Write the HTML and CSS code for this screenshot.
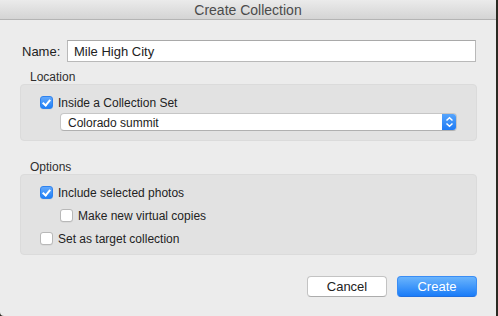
FILE: index.html
```html
<!DOCTYPE html>
<html lang="en">
<head>
    <meta charset="UTF-8">
    <title>Create Collection</title>
    <link rel="stylesheet" href="styles.css">
</head>
<body>
<div class="dialog">
    <div class="titlebar">Create Collection</div>

    <div class="content">
        <div class="name-row">
            <label class="name-label" for="name">Name:</label>
            <input type="text" id="name" class="name-input" value="Mile High City">
        </div>

        <div class="section-title">Location</div>
        <div class="group location">
            <div class="check-row">
                <span class="check checked"></span>
                <span class="check-label">Inside a Collection Set</span>
            </div>
            <div class="popup">
                <span class="popup-text">Colorado summit</span>
                <span class="stepper">
                    <svg width="9" height="12" viewBox="0 0 9 12">
                        <path d="M1.5 4.5 L4.5 1.8 L7.5 4.5 M1.5 7.5 L4.5 10.2 L7.5 7.5" fill="none" stroke="#fff" stroke-width="1.5"/>
                    </svg>
                </span>
            </div>
        </div>

        <div class="section-title options-title">Options</div>
        <div class="group options">
            <div class="check-row">
                <span class="check checked"></span>
                <span class="check-label">Include selected photos</span>
            </div>
            <div class="check-row indent">
                <span class="check"></span>
                <span class="check-label">Make new virtual copies</span>
            </div>
            <div class="check-row">
                <span class="check"></span>
                <span class="check-label">Set as target collection</span>
            </div>
        </div>

        <div class="buttons">
            <button type="button" class="btn">Cancel</button>
            <button type="button" class="btn primary">Create</button>
        </div>
    </div>
</div>
</body>
</html>
```

FILE: styles.css
```css
* {
    margin: 0;
    padding: 0;
    box-sizing: border-box;
    font-family: 'Liberation Sans', Arial, sans-serif;
}

body {
    background: #2b2a22;
    width: 498px;
    height: 316px;
    overflow: hidden;
}

.dialog {
    width: 496px;
    height: 316px;
    background: #ececec;
    border-bottom-left-radius: 4px;
    display: flex;
    flex-direction: column;
    color: #222;
    font-size: 12px;
}

.titlebar {
    height: 20px;
    line-height: 20px;
    text-align: center;
    font-size: 14px;
    color: #4b4b4b;
    background: linear-gradient(#ebebeb, #d4d4d4);
    border-bottom: 1px solid #b4b4b4;
}

.content {
    padding: 20px 19px 0 20px;
    display: flex;
    flex-direction: column;
}

.name-row {
    display: flex;
    align-items: center;
    font-size: 13px;
}

.name-label {
    width: 47px;
    padding-left: 2px;
}

.name-input {
    width: 409px;
    height: 22px;
    border: 1px solid #b9b9b9;
    border-top-color: #a9a9a9;
    background: #fff;
    padding: 0 6px;
    font-size: 13px;
    color: #222;
    outline: none;
}

.section-title {
    height: 15px;
    line-height: 17px;
    margin-top: 7px;
    padding-left: 10px;
    color: #2e2e2e;
}

.options-title {
    margin-top: 18px;
}

.group {
    background: #e2e2e2;
    border: 1px solid #dbdbdb;
    border-radius: 4px;
    padding: 9px 19px 9px 19px;
    display: flex;
    flex-direction: column;
}

.location {
    height: 57px;
    gap: 3px;
}

.options {
    height: 81px;
    gap: 7px;
    padding-bottom: 8px;
}

.check-row {
    height: 16px;
    display: flex;
    align-items: center;
    gap: 5px;
}

.check-label {
    padding-top: 1px;
}

.check-row.indent {
    padding-left: 20px;
}

.check {
    width: 13px;
    height: 13px;
    border-radius: 3px;
    background: #fff;
    border: 1px solid #b8b8b8;
    box-shadow: 0 0.5px 0 rgba(0, 0, 0, 0.08);
    position: relative;
    flex-shrink: 0;
}

.check.checked {
    background: linear-gradient(#62a8fb, #1f7ff6);
    border-color: #2d82ef;
}

.check.checked::after {
    content: "";
    position: absolute;
    left: 3px;
    top: 1px;
    width: 3px;
    height: 6px;
    border: solid #fff;
    border-width: 0 2px 2px 0;
    transform: rotate(40deg);
}

.popup {
    margin-left: 20px;
    width: 397px;
    height: 18px;
    background: #fff;
    border: 1px solid #c6c6c6;
    border-bottom-color: #b0b0b0;
    border-radius: 4px;
    display: flex;
    align-items: center;
    justify-content: space-between;
    overflow: hidden;
}

.popup-text {
    padding-left: 7px;
    padding-top: 1px;
}

.stepper {
    width: 15px;
    height: 18px;
    margin-right: -1px;
    margin-top: -1px;
    margin-bottom: -1px;
    background: linear-gradient(#5aa7fc, #1b78f5);
    border-radius: 0 4px 4px 0;
    display: flex;
    align-items: center;
    justify-content: center;
}

.buttons {
    margin-top: 21px;
    display: flex;
    justify-content: flex-end;
    gap: 10px;
}

.btn {
    width: 80px;
    height: 21px;
    border-radius: 4px;
    border: 1px solid #c3c3c3;
    border-bottom-color: #acacac;
    background: #fff;
    color: #222;
    font-size: 13px;
}

.btn.primary {
    background: linear-gradient(#6ab4fc, #1a7cf8);
    border-color: #3a8df5;
    border-bottom-color: #1f6fe0;
    color: #fff;
}
```
